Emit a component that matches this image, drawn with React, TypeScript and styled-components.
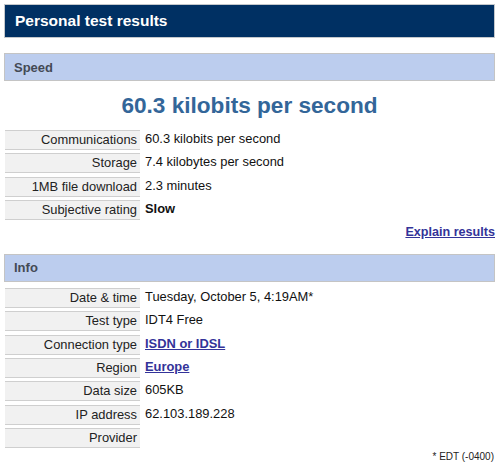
import React from "react";
import styled, { createGlobalStyle } from "styled-components";

const Global = createGlobalStyle`
  html, body { margin: 0; padding: 0; background: #fff; }
  body { font-family: "Liberation Sans", Arial, sans-serif; color: #222; }
`;

const Page = styled.div`
  width: 491px;
  padding: 4px 0 0 4px;
  display: flex;
  flex-direction: column;
`;

const TitleBar = styled.div`
  height: 34px;
  box-sizing: border-box;
  background: #003063;
  border: 1px solid #c4c8cc;
  color: #fff;
  font-weight: bold;
  font-size: 15.5px;
  display: flex;
  align-items: center;
  padding-left: 10px;
`;

const SectionHeader = styled.div<{ $top: number }>`
  margin-top: ${(p) => p.$top}px;
  height: 28px;
  box-sizing: border-box;
  background: #bccdee;
  border: 1px solid #c4c4c4;
  color: #444a55;
  font-weight: bold;
  font-size: 13px;
  display: flex;
  align-items: center;
  padding-left: 9px;
`;

const BigValue = styled.div`
  height: 49px;
  display: flex;
  align-items: center;
  justify-content: center;
  font-size: 22.6px;
  font-weight: bold;
  color: #336699;
  padding-top: 1px;
  box-sizing: border-box;
`;

const Rows = styled.div<{ $top: number }>`
  margin-top: ${(p) => p.$top}px;
  display: grid;
  grid-template-columns: 135px 1fr;
  row-gap: 3.333px;
  padding-left: 1px;
  font-size: 12.9px;
`;

const Label = styled.div`
  height: 20px;
  box-sizing: border-box;
  background: #f1f1f1;
  border-top: 1px solid #cfcfcf;
  border-bottom: 1px solid #cfcfcf;
  text-align: right;
  padding-right: 3px;
  line-height: 18px;
  color: #222;
`;

const Value = styled.div<{ $bold?: boolean }>`
  height: 20px;
  line-height: 18px;
  padding-left: 5px;
  font-weight: ${(p) => (p.$bold ? "bold" : "normal")};
  color: #111;
`;

const Link = styled.a`
  color: #333399;
  font-weight: bold;
  text-decoration: underline;
`;

const ExplainRow = styled.div`
  height: 24px;
  display: flex;
  justify-content: flex-end;
  align-items: center;
  font-size: 12.6px;
`;

const Footnote = styled.div`
  margin-top: 3px;
  text-align: right;
  font-size: 10px;
  color: #222;
  padding-right: 1px;
`;

type Row = { label: string; value: React.ReactNode; bold?: boolean };

const speedRows: Row[] = [
  { label: "Communications", value: "60.3 kilobits per second" },
  { label: "Storage", value: "7.4 kilobytes per second" },
  { label: "1MB file download", value: "2.3 minutes" },
  { label: "Subjective rating", value: "Slow", bold: true },
];

const infoRows: Row[] = [
  { label: "Date & time", value: "Tuesday, October 5, 4:19AM*" },
  { label: "Test type", value: "IDT4 Free" },
  { label: "Connection type", value: <Link href="#">ISDN or IDSL</Link> },
  { label: "Region", value: <Link href="#">Europe</Link> },
  { label: "Data size", value: "605KB" },
  { label: "IP address", value: "62.103.189.228" },
  { label: "Provider", value: "" },
];

const Table = ({ rows, top }: { rows: Row[]; top: number }) => (
  <Rows $top={top}>
    {rows.map((r) => (
      <React.Fragment key={r.label}>
        <Label>{r.label}</Label>
        <Value $bold={r.bold}>{r.value}</Value>
      </React.Fragment>
    ))}
  </Rows>
);

export default function App() {
  return (
    <>
      <Global />
      <Page>
        <TitleBar>Personal test results</TitleBar>
        <SectionHeader $top={15}>Speed</SectionHeader>
        <BigValue>60.3 kilobits per second</BigValue>
        <Table rows={speedRows} top={0} />
        <ExplainRow>
          <Link href="#">Explain results</Link>
        </ExplainRow>
        <SectionHeader $top={10}>Info</SectionHeader>
        <Table rows={infoRows} top={6} />
        <Footnote>* EDT (-0400)</Footnote>
      </Page>
    </>
  );
}
